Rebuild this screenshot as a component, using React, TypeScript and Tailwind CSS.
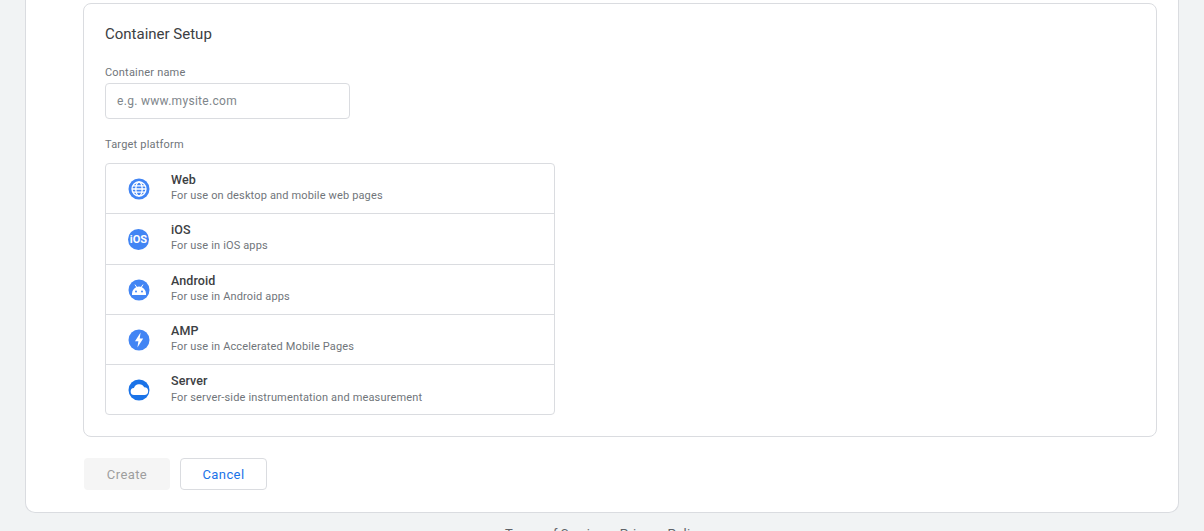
const platforms = [
  { name: "Web", desc: "For use on desktop and mobile web pages", icon: "web", h: "h-[50px]", gap: "" },
  { name: "iOS", desc: "For use in iOS apps", icon: "ios", h: "h-[51px]", gap: "" },
  { name: "Android", desc: "For use in Android apps", icon: "android", h: "h-[50px]", gap: "" },
  { name: "AMP", desc: "For use in Accelerated Mobile Pages", icon: "amp", h: "h-[50px]", gap: "" },
  { name: "Server", desc: "For server-side instrumentation and measurement", icon: "server", h: "h-[49px]", gap: "mt-[1px]" },
];

function PlatformIcon({ type }: { type: string }) {
  if (type === "ios") {
    return (
      <div className="w-[21px] h-[21px] rounded-full bg-[#4285f4] flex items-center justify-center text-white text-[11px] font-bold leading-none">
        iOS
      </div>
    );
  }
  return (
    <svg width="22" height="22" viewBox="0 0 22 22">
      <circle cx="11" cy="11" r="10.5" fill={type === "server" ? "#1a73e8" : "#4285f4"} />
      {type === "web" && (
        <g fill="none" stroke="#fff" strokeWidth="1.3">
          <circle cx="11" cy="11" r="7" />
          <ellipse cx="11" cy="11" rx="3.2" ry="7" />
          <path d="M4 11h14M5 7.8h12M5 14.2h12" />
        </g>
      )}
      {type === "android" && (
        <g fill="#fff">
          <path d="M4 16v-1.4a7 7 0 0 1 14 0V16z" />
          <path d="M7 5.6l1.7 2.6M15 5.6l-1.7 2.6" stroke="#fff" strokeWidth="1" />
          <circle cx="8" cy="12.6" r="1" fill="#4285f4" />
          <circle cx="14" cy="12.6" r="1" fill="#4285f4" />
        </g>
      )}
      {type === "amp" && <path d="M12.6 3.4 7 12.3h3.4l-1 6.3 5.8-9.2h-3.5z" fill="#fff" />}
      {type === "server" && (
        <path
          d="M6.4 16a3.5 3.5 0 0 1-.5-7 5.6 5.6 0 0 1 10.3-.8 3.9 3.9 0 0 1 .1 7.8z"
          fill="#fff"
        />
      )}
    </svg>
  );
}

export default function App() {
  return (
    <div className="h-screen overflow-hidden bg-[#f1f3f4] px-[25px] font-['Roboto',sans-serif]">
      <div className="w-[1154px] h-[513px] bg-white border-x border-b border-[#dadce0] rounded-b-[10px] pt-[3px] pl-[57px]">
        <div className="w-[1074px] h-[434px] border border-[#dadce0] rounded-[8px] pt-[20px] pl-[21px]">
          <h2 className="text-[15px] leading-[20px] text-[#3c4043]">Container Setup</h2>
          <p className="mt-[22px] text-[11px] leading-[14px] tracking-[0.2px] text-[#70757a]">Container name</p>
          <div className="mt-[3px] w-[245px] h-[36px] border border-[#dadce0] rounded-[4px] flex items-center px-[11px] text-[12px] tracking-[0.3px] text-[#80868b]">
            e.g. www.mysite.com
          </div>
          <p className="mt-[19px] text-[11px] leading-[14px] tracking-[0.2px] text-[#70757a]">Target platform</p>
          <div className="mt-[11px] w-[450px] border border-[#dadce0] rounded-[4px] divide-y divide-[#dadce0]">
            {platforms.map((p) => (
              <div key={p.name} className={`${p.h} flex`}>
                <div className="w-[65px] flex items-center justify-center">
                  <PlatformIcon type={p.icon} />
                </div>
                <div className="pt-[8px]">
                  <div className="text-[12.5px] leading-[16px] font-medium tracking-[0.1px] text-[#3c4043]">{p.name}</div>
                  <div className={`${p.gap} text-[11px] leading-[15px] tracking-[0.15px] text-[#70757a]`}>{p.desc}</div>
                </div>
              </div>
            ))}
          </div>
        </div>
        <div className="mt-[21px] ml-[1px] flex gap-[10px] text-[13px] font-[450] tracking-[0.4px]">
          <button className="w-[86px] h-[32px] pt-[1px] rounded-[4px] bg-[#f5f5f5] text-[#9e9e9e]">Create</button>
          <button className="w-[87px] h-[32px] pt-[1px] rounded-[4px] border border-[#dadce0] bg-white text-[#1a73e8]">Cancel</button>
        </div>
      </div>
      <div className="mt-[12px] ml-[480px] flex text-[13px] leading-[18px] tracking-[0.1px] text-[#5f6368] whitespace-nowrap">
        <span>Terms of Service</span>
        <span className="ml-[16px] tracking-[0.3px]">Privacy Policy</span>
      </div>
    </div>
  );
}
